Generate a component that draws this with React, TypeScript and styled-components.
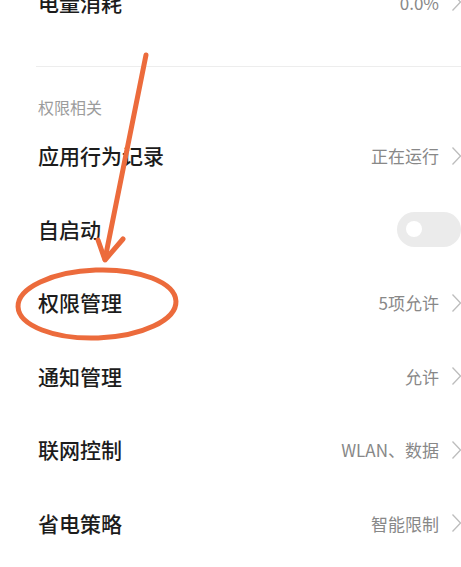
import React from "react";
import styled, { createGlobalStyle } from "styled-components";

const Global = createGlobalStyle`
  html, body { margin: 0; padding: 0; background: #fff; overflow: hidden; }
  body { font-family: "Noto Sans CJK SC", "Noto Sans", sans-serif; }
`;

const Screen = styled.div`
  position: relative;
  width: 461px;
  height: 567px;
  overflow: hidden;
  background: #fff;
`;

const List = styled.div`
  display: flex;
  flex-direction: column;
  margin-top: -35px;
`;

const Row = styled.div<{ $h?: number }>`
  display: flex;
  align-items: center;
  justify-content: space-between;
  height: ${(p) => p.$h ?? 73.5}px;
  padding-left: 38px;
  box-sizing: border-box;
`;

const Title = styled.div`
  font-size: 21px;
  font-weight: 500;
  color: #1c1c1c;
  line-height: 1;
`;

const Right = styled.div`
  display: flex;
  align-items: center;
`;

const Value = styled.div`
  font-size: 17px;
  color: #888;
  line-height: 1;
  margin-right: 12px;
`;

const Chevron = styled.svg`
  width: 10px;
  height: 20px;
  display: block;
`;

const Divider = styled.div`
  height: 1px;
  margin: 27px 0 0 36px;
  background: #ededed;
`;

const SectionHeader = styled.div`
  padding: 31px 0 3px 38px;
  font-size: 16px;
  line-height: 18px;
  color: #9c9c9c;
`;

const Switch = styled.div`
  width: 64px;
  height: 35px;
  border-radius: 18px;
  background: #ebebeb;
  display: flex;
  align-items: center;
  padding-left: 9px;
  box-sizing: border-box;
`;

const Knob = styled.div`
  width: 16px;
  height: 16px;
  border-radius: 50%;
  background: #fff;
`;

const Annotation = styled.svg`
  position: absolute;
  left: 0;
  top: 0;
  width: 461px;
  height: 567px;
  pointer-events: none;
`;

const Arrow = () => (
  <Chevron viewBox="0 0 10 20">
    <path d="M1.5 1.5 L9.5 10 L1.5 18.5" fill="none" stroke="#bdbdbd" strokeWidth="1.3" />
  </Chevron>
);

type Item = { title: string; value?: string; toggle?: boolean };

const items: Item[] = [
  { title: "应用行为记录", value: "正在运行" },
  { title: "自启动", toggle: true },
  { title: "权限管理", value: "5项允许" },
  { title: "通知管理", value: "允许" },
  { title: "联网控制", value: "WLAN、数据" },
  { title: "省电策略", value: "智能限制" },
];

export default function App() {
  return (
    <Screen>
      <Global />
      <List>
        <Row $h={74}>
          <Title>电量消耗</Title>
          <Right>
            <Value>0.0%</Value>
            <Arrow />
          </Right>
        </Row>
        <Divider />
        <SectionHeader>权限相关</SectionHeader>
        {items.map((it) => (
          <Row key={it.title}>
            <Title>{it.title}</Title>
            {it.toggle ? (
              <Switch>
                <Knob />
              </Switch>
            ) : (
              <Right>
                <Value>{it.value}</Value>
                <Arrow />
              </Right>
            )}
          </Row>
        ))}
      </List>
      <Annotation viewBox="0 0 461 567">
        <g stroke="#ec6b3c" strokeLinecap="round" fill="none">
          <path d="M146 55 L105 259" strokeWidth="5" />
          <path d="M98 240 L105 260 L123 239" strokeWidth="5" strokeLinejoin="round" />
          <ellipse cx="97" cy="304" rx="79" ry="34" strokeWidth="5" transform="rotate(-2 97 304)" />
        </g>
      </Annotation>
    </Screen>
  );
}
